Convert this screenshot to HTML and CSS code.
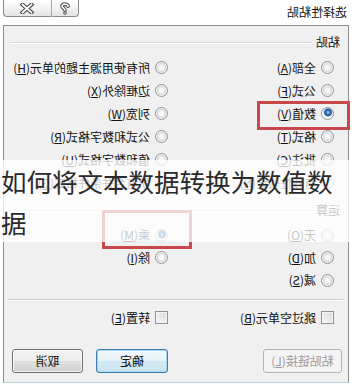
FILE: index.html
```html
<!DOCTYPE html>
<html lang="zh">
<head>
<meta charset="utf-8">
<title>选择性粘贴</title>
<link rel="stylesheet" href="styles.css">
</head>
<body>
<div class="page">
  <div class="dialog">
    <div class="titlebar">
      <span class="title">选择性粘贴</span>
      <div class="caption">
        <span class="cbtn help">
          <svg width="12" height="13" viewBox="0 0 12 13">
            <path d="M3 4.2 C3 1.6 9 1.4 9 4.2 C9 6.2 6 6.2 6 8.3" fill="none" stroke="#4a4a4a" stroke-width="3.6" stroke-linecap="round"/>
            <circle cx="6" cy="11" r="1.8" fill="#4a4a4a"/>
            <path d="M3 4.2 C3 1.6 9 1.4 9 4.2 C9 6.2 6 6.2 6 8.3" fill="none" stroke="#fff" stroke-width="1.6" stroke-linecap="round"/>
            <circle cx="6" cy="11" r="0.8" fill="#fff"/>
          </svg>
        </span>
        <span class="cbtn close">
          <svg width="16" height="11" viewBox="0 0 16 11">
            <path d="M3.5 1.5 L12.5 9.5 M12.5 1.5 L3.5 9.5" stroke="#4a4a4a" stroke-width="4" stroke-linecap="square"/>
            <path d="M3.5 1.5 L12.5 9.5 M12.5 1.5 L3.5 9.5" stroke="#fff" stroke-width="1.8" stroke-linecap="square"/>
          </svg>
        </span>
      </div>
    </div>

    <div class="frame">
      <div class="ghead"><span class="glabel">粘贴</span><i class="gline"></i></div>
      <div class="grid paste">
        <label class="opt"><i class="radio"></i>全部(<u>A</u>)</label>
        <label class="opt"><i class="radio"></i>所有使用源主题的单元(<u>H</u>)</label>
        <label class="opt"><i class="radio"></i>公式(<u>F</u>)</label>
        <label class="opt"><i class="radio"></i>边框除外(<u>X</u>)</label>
        <label class="opt"><i class="radio on"></i>数值(<u>V</u>)</label>
        <label class="opt"><i class="radio"></i>列宽(<u>W</u>)</label>
        <label class="opt"><i class="radio"></i>格式(<u>T</u>)</label>
        <label class="opt"><i class="radio"></i>公式和数字格式(<u>R</u>)</label>
        <label class="opt"><i class="radio"></i>批注(<u>C</u>)</label>
        <label class="opt"><i class="radio"></i>值和数字格式(<u>U</u>)</label>
        <label class="opt"><i class="radio"></i>有效性验证(<u>N</u>)</label>
        <label class="opt"><i class="radio"></i>所有合并条件格式(<u>G</u>)</label>
      </div>

      <div class="ghead second"><span class="glabel">运算</span><i class="gline"></i></div>
      <div class="grid ops">
        <label class="opt"><i class="radio"></i>无(<u>O</u>)</label>
        <label class="opt"><i class="radio on"></i>乘(<u>M</u>)</label>
        <label class="opt"><i class="radio"></i>加(<u>D</u>)</label>
        <label class="opt"><i class="radio"></i>除(<u>I</u>)</label>
        <label class="opt"><i class="radio"></i>减(<u>S</u>)</label>
      </div>

      <div class="sep"></div>

      <div class="grid checks">
        <label class="opt"><i class="check"></i>跳过空单元(<u>B</u>)</label>
        <label class="opt"><i class="check"></i>转置(<u>E</u>)</label>
      </div>

      <div class="buttons">
        <span class="btn disabled">粘贴链接(<u>L</u>)</span>
        <span class="btn default">确定</span>
        <span class="btn">取消</span>
      </div>
    </div>

    <div class="mark mark-value"></div>
    <div class="mark mark-mul"></div>
  </div>

  <div class="caption-overlay">如何将文本数据转换为数值数据</div>
</div>
</body>
</html>
```

FILE: styles.css
```css
* {
  box-sizing: border-box;
}

html,
body {
  margin: 0;
  padding: 0;
  background: #ffffff;
}

body {
  width: 352px;
  height: 386px;
  overflow: hidden;
  font-family: "Noto Sans CJK SC", "Noto Sans", sans-serif;
  font-size: 12px;
  color: #111;
}

.page {
  position: relative;
  width: 352px;
  height: 386px;
}

/* the screenshot shows the dialog mirrored horizontally */
.dialog {
  position: relative;
  width: 352px;
  height: 386px;
  transform: scaleX(-1);
  background: #ffffff;
}

.titlebar {
  height: 25px;
  display: flex;
  justify-content: space-between;
  align-items: flex-start;
  padding: 0 3px 0 5px;
}

.title {
  margin-top: 5px;
  line-height: 14px;
  font-size: 12px;
  color: #111;
}

.caption {
  display: flex;
}

.cbtn {
  height: 17px;
  display: flex;
  align-items: center;
  justify-content: center;
  border: 1px solid #8a8a8a;
  border-top: none;
  background: linear-gradient(#ffffff, #f1f1f1 55%, #e4e4e4);
}

.cbtn.help {
  width: 28px;
  border-right: 1px solid #a8a8a8;
  border-radius: 0 0 0 4px;
}

.cbtn.close {
  width: 48px;
  border-left: none;
  border-radius: 0 0 4px 0;
}

.frame {
  margin-left: 3px;
  width: 346px;
  height: 358px;
  border: 1px solid #8d8d8d;
  border-bottom-color: #b9d6de;
  background: #f0f0f0;
  display: flex;
  flex-direction: column;
}

.ghead {
  margin-top: 9px;
  height: 14px;
  display: flex;
  align-items: center;
  padding: 0 6px 0 8px;
}

.ghead.second {
  margin-top: 9px;
}

.glabel {
  line-height: 14px;
}

.gline {
  flex: 1;
  height: 2px;
  margin: 2px 0 0 4px;
  border-top: 1px solid #d3d9dd;
  border-bottom: 1px solid #ffffff;
}

.grid {
  display: grid;
  grid-template-columns: 166px 1fr;
  padding-left: 14px;
}

.grid.paste {
  margin-top: 7px;
  grid-auto-rows: 23px;
}

.grid.ops {
  margin-top: 7px;
  grid-auto-rows: 22.5px;
}

.grid.checks {
  margin-top: 8px;
  grid-auto-rows: 18px;
}

.opt {
  display: flex;
  align-items: center;
  white-space: nowrap;
  line-height: 14px;
}

.opt u {
  text-decoration: underline;
  text-underline-offset: 1px;
}

.radio {
  flex: none;
  width: 13px;
  height: 13px;
  margin-right: 5px;
  border-radius: 50%;
  border: 1px solid #8f9395;
  background: radial-gradient(circle at 50% 50%, #f6f6f6 0, #f6f6f6 2.5px, #d6d8da 4px, #fbfbfb 5.5px);
}

.radio.on {
  background: radial-gradient(circle at 45% 40%, #b7dcf7 0, #3a7fc4 1.8px, #1b4f8a 3.4px, #dfe3e6 4.3px, #fbfbfb 5.5px);
}

.check {
  flex: none;
  width: 13px;
  height: 13px;
  margin-right: 5px;
  border: 1px solid #8f9395;
  background: linear-gradient(135deg, #d9dbdd, #f7f7f7);
  box-shadow: inset 0 0 0 1px #f4f4f4;
}

.sep {
  margin: 7px 4px 0 5px;
  height: 2px;
  border-top: 1px solid #c8cbcd;
  border-bottom: 1px solid #ffffff;
}

.buttons {
  margin-top: 22px;
  height: 24px;
  display: flex;
  padding: 0 8px 0 6px;
}

.btn {
  height: 24px;
  width: 71px;
  display: flex;
  align-items: center;
  justify-content: center;
  border: 1px solid #707070;
  border-radius: 3px;
  background: linear-gradient(#f3f3f3, #ececec 48%, #dedede 52%, #d2d2d2);
  box-shadow: inset 0 0 0 1px rgba(255, 255, 255, 0.7);
  color: #111;
  white-space: nowrap;
}

.btn.disabled {
  width: 79px;
  margin-right: auto;
  border-color: #b2b6b8;
  background: #f4f4f4;
  color: #9a9a9a;
  box-shadow: none;
}

.btn.default {
  width: 72px;
  margin-right: 13px;
  border-color: #3d7bad;
  background: linear-gradient(#f1f8fc, #e6f2f9 48%, #d5e9f5 52%, #cce4f2);
  box-shadow: inset 0 0 0 1px #a7d8f3;
}

.mark {
  position: absolute;
  border: 3px solid #c8474b;
}

.mark-value {
  left: 2px;
  top: 101px;
  width: 93px;
  height: 29px;
}

.mark-mul {
  left: 160px;
  top: 210px;
  width: 90px;
  height: 39px;
}

.caption-overlay {
  position: absolute;
  left: 0;
  top: 160px;
  width: 352px;
  height: 82px;
  padding-left: 1px;
  background: rgba(255, 255, 255, 0.76);
  font-family: "Noto Sans CJK SC", sans-serif;
  font-size: 25.5px;
  line-height: 41px;
  color: #2a2a2a;
}
```
